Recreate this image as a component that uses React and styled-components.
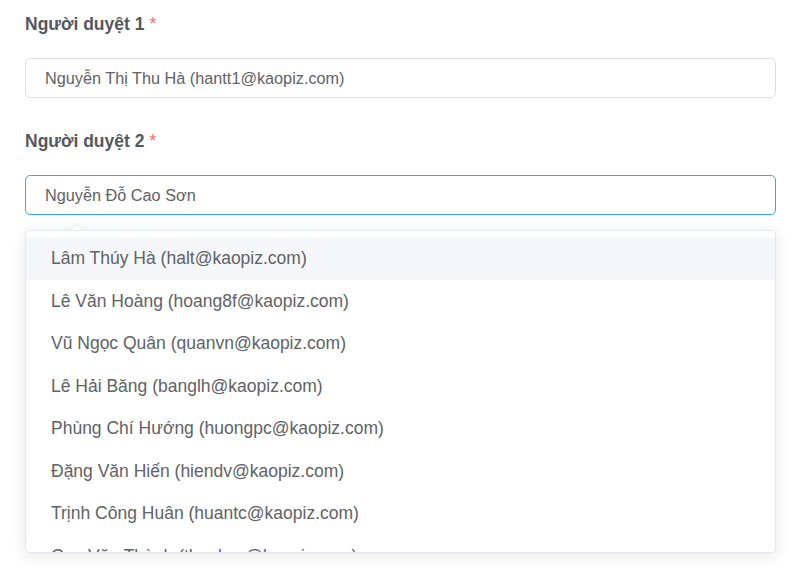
import React from 'react';
import styled, { createGlobalStyle } from 'styled-components';

const GlobalStyle = createGlobalStyle`
  html, body {
    margin: 0;
    padding: 0;
    background: #fff;
  }
  body {
    font-family: "Liberation Sans", Arial, sans-serif;
  }
`;

const Page = styled.div`
  width: 798px;
  height: 577px;
  box-sizing: border-box;
  padding: 12px 22px 0 25px;
  overflow: hidden;
`;

const FormItem = styled.div`
  display: flex;
  flex-direction: column;
  margin-bottom: 31px;
  position: relative;
`;

const Label = styled.label`
  font-size: 17.5px;
  line-height: 25px;
  font-weight: 700;
  color: #55585e;
  margin-bottom: 21px;
  .required {
    color: #f56c6c;
    margin-left: 5px;
    font-weight: 400;
  }
`;

const Input = styled.div`
  height: 40px;
  box-sizing: border-box;
  border: 1px solid ${(p) => (p.focused ? '#409eff' : '#dcdfe6')};
  border-radius: 5px;
  padding: 0 19px;
  display: flex;
  align-items: center;
  font-size: 16.25px;
  color: #606266;
  background: #fff;
`;

const Dropdown = styled.div`
  position: absolute;
  left: 0;
  right: 0;
  top: 100%;
  margin-top: 14.5px;
  height: 323px;
  box-sizing: border-box;
  border: 1px solid #e4e7ed;
  border-radius: 5px;
  background: #fff;
  box-shadow: 0 2.5px 15px 0 rgba(0, 0, 0, 0.1);
  z-index: 5;
`;

const Arrow = styled.div`
  position: absolute;
  top: -8px;
  left: 44px;
  width: 0;
  height: 0;
  border: 7.5px solid transparent;
  border-top-width: 0;
  border-bottom-color: #e4e7ed;
  &::after {
    content: '';
    position: absolute;
    left: -6.5px;
    top: 1px;
    border: 6.5px solid transparent;
    border-top-width: 0;
    border-bottom-color: #fff;
  }
`;

const List = styled.ul`
  list-style: none;
  margin: 0;
  padding: 6.5px 0;
  height: 100%;
  box-sizing: border-box;
  overflow: hidden;
  border-radius: 5px;
`;

const Option = styled.li`
  height: 42.5px;
  line-height: 42.5px;
  padding: 0 25px;
  font-size: 17.5px;
  color: #606266;
  white-space: nowrap;
  background: ${(p) => (p.hover ? '#f5f7fa' : 'transparent')};
`;

const options = [
  'Lâm Thúy Hà (halt@kaopiz.com)',
  'Lê Văn Hoàng (hoang8f@kaopiz.com)',
  'Vũ Ngọc Quân (quanvn@kaopiz.com)',
  'Lê Hải Băng (banglh@kaopiz.com)',
  'Phùng Chí Hướng (huongpc@kaopiz.com)',
  'Đặng Văn Hiến (hiendv@kaopiz.com)',
  'Trịnh Công Huân (huantc@kaopiz.com)',
  'Cao Văn Thành (thanhcv@kaopiz.com)',
];

export default function App() {
  return (
    <Page>
      <GlobalStyle />
      <FormItem>
        <Label>
          Người duyệt 1<span className="required">*</span>
        </Label>
        <Input>Nguyễn Thị Thu Hà (hantt1@kaopiz.com)</Input>
      </FormItem>
      <FormItem>
        <Label>
          Người duyệt 2<span className="required">*</span>
        </Label>
        <Input focused>Nguyễn Đỗ Cao Sơn</Input>
        <Dropdown>
          <Arrow />
          <List>
            {options.map((o, i) => (
              <Option key={o} hover={i === 0}>
                {o}
              </Option>
            ))}
          </List>
        </Dropdown>
      </FormItem>
    </Page>
  );
}
